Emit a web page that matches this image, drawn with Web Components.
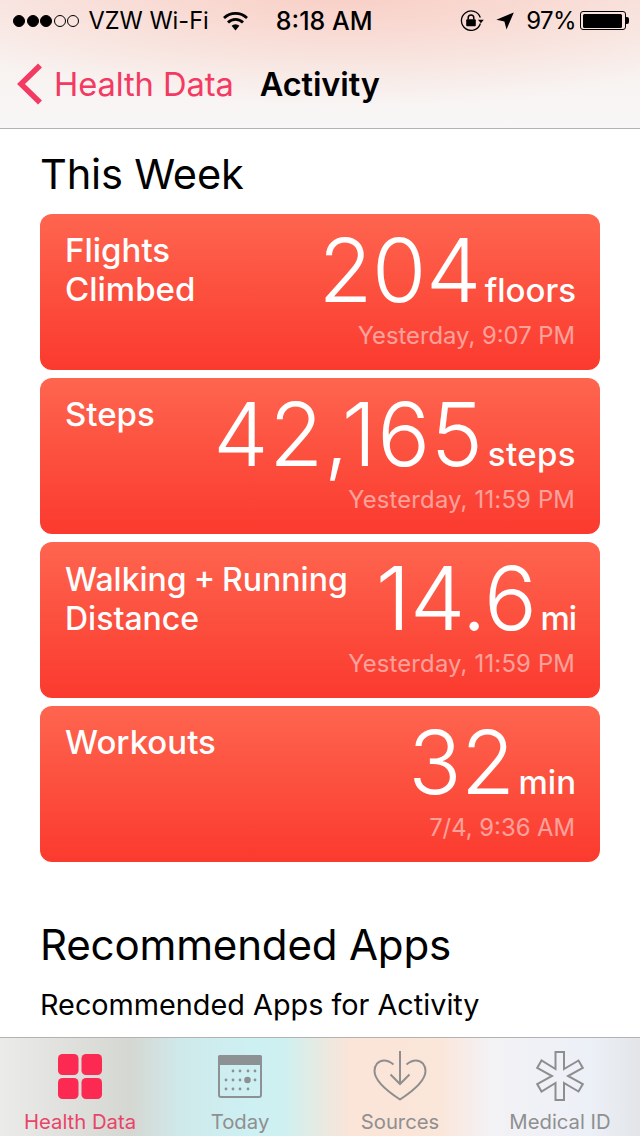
<!DOCTYPE html>
<html>
<head>
<meta charset="utf-8">
<title>Activity</title>
<style>
    html, body { margin: 0; height: 100%; }
    body {
        width: 640px;
        height: 1136px;
        overflow: hidden;
        background: #fff;
        font-family: Inter, "Liberation Sans", sans-serif;
        display: flex;
        flex-direction: column;
    }
</style>
</head>
<body>
<app-header></app-header>
<main-list>
    <section-title>This Week</section-title>
    <data-card label="Flights<br>Climbed" value="204" unit="floors" time="Yesterday, 9:07 PM"></data-card>
    <data-card style="--value-spacing: .7px; --unit-spacing: .4px; --time-spacing: .2px" label="Steps" value="42,165" unit="steps" time="Yesterday, 11:59 PM"></data-card>
    <data-card style="--label-size: 32px; --label-word: -1.5px; --label-top: 2px; --unit-spacing: -1px; --time-spacing: .2px" label="Walking + Running<br>Distance" value="14.6" unit="mi" time="Yesterday, 11:59 PM"></data-card>
    <data-card label="Workouts" value="32" unit="min" time="7/4, 9:36 AM"></data-card>
    <section-title class="apps">Recommended Apps</section-title>
    <sub-title>Recommended Apps for Activity</sub-title>
</main-list>
<tab-bar></tab-bar>

<script>
class AppHeader extends HTMLElement {
    constructor() {
        super();
        this.attachShadow({mode: 'open'}).innerHTML = `
            <style>
                :host {
                    display: block;
                    height: 128px;
                    flex: none;
                    border-bottom: 1px solid #b4b2b2;
                    background:
                        radial-gradient(ellipse 470px 115px at 350px -10px, rgba(248,205,195,.95), rgba(248,205,195,0)),
                        linear-gradient(180deg, #f9ecE9 0, #f8f3f1 70px, #f8f6f6 128px);
                    color: #000;
                }
                .status {
                    height: 41px;
                    display: flex;
                    align-items: center;
                    font-size: 24px;
                    padding: 0 11px 0 13px;
                    white-space: nowrap;
                }
                .dots { display: flex; gap: 1.6px; margin-right: 9px; }
                .dots i { width: 12px; height: 12px; border-radius: 50%; border: 1.2px solid #000; box-sizing: border-box; }
                .dots i.on { background: #000; }
                .carrier { margin-right: 14px; font-size: 23.600px; }
                .time { font-weight: 500; margin-left: 28px; font-size: 25px; }
                .right { margin-left: auto; display: flex; align-items: center; }
                .lock { margin-right: 12px; }
                .arrow { margin-right: 12px; }
                .percent { letter-spacing: -.6px; }
                .battery { margin-left: 4px; display: flex; align-items: center; }
                .battery b { display: block; width: 46px; height: 19px; border: 1px solid #000; border-radius: 3px; padding: 1.5px; box-sizing: border-box; }
                .battery b::before { content: ""; display: block; width: 96%; height: 100%; background: #000; border-radius: 1.5px; }
                .battery u { display: block; width: 3px; height: 7px; background: #000; border-radius: 0 2px 2px 0; }
                .nav {
                    height: 86px;
                    padding: 0 0 1px 17px;
                    display: flex;
                    align-items: center;
                    white-space: nowrap;
                }
                .back { color: #f33a62; font-size: 32.700px; margin-left: 11px; letter-spacing: -.1px; }
                .title { font-size: 32.500px; font-weight: 600; margin-left: 26px; letter-spacing: -.1px; }
                .nav svg { display: block; }
            </style>
            <div class="status">
                <span class="dots"><i class="on"></i><i class="on"></i><i class="on"></i><i></i><i></i></span>
                <span class="carrier">VZW Wi-Fi</span>
                <svg width="25" height="20" viewBox="0 0 25 20" fill="none" stroke="#000" stroke-width="2.800"><path d="M1 7a16.500 16.500 0 0 1 23 0"/><path d="M5 11.500a10.600 10.600 0 0 1 15 0"/><path d="M8.600 14.800a5.500 5.500 0 0 1 7.800 0L12.500 19.400z" fill="#000" stroke="none"/></svg>
                <span class="time">8:18 AM</span>
                <span class="right">
                    <svg class="lock" width="24" height="21" viewBox="0 0 24 21"><path d="M20.300 7.500A9.700 9.700 0 1 0 20.400 13.500" fill="none" stroke="#000" stroke-width="1.300"/><path d="M18 9.800h5.800l-2.900 3.400z" fill="#000"/><rect x="6.200" y="9.200" width="9.600" height="7" rx="1" fill="#000"/><path d="M8.200 9.400V7.800a2.800 2.800 0 0 1 5.600 0v1.600" fill="none" stroke="#000" stroke-width="1.500"/></svg>
                    <svg class="arrow" width="18" height="18" viewBox="0 0 18 18"><path d="M17.800.4 10.500 17.600 8.400 9.600.4 7.800z" fill="#000"/></svg>
                    <span class="percent">97%</span>
                    <span class="battery"><b></b><u></u></span>
                </span>
            </div>
            <div class="nav">
                <svg width="26" height="42" viewBox="0 0 26 42"><path d="M23 2.500 4 21l19 18.500" fill="none" stroke="#f33a62" stroke-width="5.500"/></svg>
                <span class="back">Health Data</span>
                <span class="title">Activity</span>
            </div>
        `;
    }
}

class MainList extends HTMLElement {
    constructor() {
        super();
        this.attachShadow({mode: 'open'}).innerHTML = `
            <style>
                :host {
                    display: flex;
                    flex-direction: column;
                    flex: 1;
                    min-height: 0;
                    overflow: hidden;
                    padding: 17px 40px 0;
                    gap: 8px;
                }
            </style>
            <slot></slot>
        `;
    }
}

class SectionTitle extends HTMLElement {
    constructor() {
        super();
        this.attachShadow({mode: 'open'}).innerHTML = `
            <style>
                :host {
                    display: block;
                    font-size: 41.600px;
                    line-height: 57px;
                    margin-bottom: 3px;
                    color: #000;
                    letter-spacing: -.2px;
                }
                :host(.apps) { margin-top: 46px; margin-bottom: 2px; font-size: 42.100px; }
            </style>
            <slot></slot>
        `;
    }
}

class SubTitle extends HTMLElement {
    constructor() {
        super();
        this.attachShadow({mode: 'open'}).innerHTML = `
            <style>
                :host {
                    display: block;
                    font-size: 28.800px;
                    line-height: 40px;
                    color: #000;
                    margin-top: 2px;
                }
            </style>
            <slot></slot>
        `;
    }
}

class DataCard extends HTMLElement {
    constructor() {
        super();
        const get = (n) => this.getAttribute(n);
        this.attachShadow({mode: 'open'}).innerHTML = `
            <style>
                :host {
                    display: block;
                    height: 156px;
                    flex: none;
                    box-sizing: border-box;
                    border-radius: 12px;
                    color: #fff;
                    background: linear-gradient(180deg, #fe654f 0%, #fb3a2e 100%);
                    padding: 17px 24px 0 25px;
                }
                .top { display: flex; justify-content: space-between; align-items: flex-start; height: 90px; }
                .label { font-size: var(--label-size, 33px); margin-top: var(--label-top, 0); font-weight: 500; line-height: 38.500px; word-spacing: var(--label-word, 0); white-space: nowrap; }
                .reading { display: flex; align-items: baseline; white-space: nowrap; margin-top: -13px; }
                .value { font-size: 88px; font-weight: 300; line-height: 104px; letter-spacing: var(--value-spacing, -.5px); }
                .unit { font-size: 33px; font-weight: 500; margin-left: 4px; letter-spacing: var(--unit-spacing, 0); }
                .time { text-align: right; font-size: 23.800px; line-height: 30px; opacity: .5; margin-right: 1px; letter-spacing: var(--time-spacing, 0); }
            </style>
            <div class="top">
                <div class="label">${get('label')}</div>
                <div class="reading"><span class="value">${get('value')}</span><span class="unit">${get('unit')}</span></div>
            </div>
            <div class="time">${get('time')}</div>
        `;
    }
}

class TabItem extends HTMLElement {
    constructor() {
        super();
        this.attachShadow({mode: 'open'}).innerHTML = `
            <style>
                :host {
                    display: flex;
                    flex-direction: column;
                    align-items: center;
                    flex: 1;
                    color: #8f8f8f;
                    font-size: 20.300px;
                }
                :host([active]) { color: #e8446a; }
                .icon { height: 52px; margin-top: 12px; display: flex; align-items: center; justify-content: center; }
                .text { line-height: 24px; margin-top: 8px; white-space: nowrap; }
                ::slotted(svg) { display: block; }
            </style>
            <div class="icon"><slot></slot></div>
            <div class="text">${this.getAttribute('text')}</div>
        `;
    }
}

class TabBar extends HTMLElement {
    constructor() {
        super();
        this.attachShadow({mode: 'open'}).innerHTML = `
            <style>
                :host {
                    display: flex;
                    flex: none;
                    height: 98px;
                    border-top: 1px solid #b4b2b0;
                    background: linear-gradient(90deg, #ebebe9 0, #d5d7d2 130px, #cfe9ea 180px, #cdf0f3 250px, #cff0f0 285px, #ebe9e0 325px, #fbe4d8 350px, #fbe6da 440px, #f3f2f5 490px, #ecf0f7 590px, #e3e5e8 640px);
                }
            </style>
            <tab-item active text="Health Data">
                <svg width="44" height="45" viewBox="0 0 44 45" fill="#fc2a52"><rect width="20.500" height="21" rx="4.500"/><rect x="23.500" width="20.500" height="21" rx="4.500"/><rect y="24" width="20.500" height="21" rx="4.500"/><rect x="23.500" y="24" width="20.500" height="21" rx="4.500"/></svg>
            </tab-item>
            <tab-item text="Today">
                <svg width="44" height="43" viewBox="0 0 44 43"><rect x="1" y="1" width="42" height="41" rx="2" fill="none" stroke="#8e9194" stroke-width="2"/><path d="M2 0h40a2 2 0 0 1 2 2v8H0V2a2 2 0 0 1 2-2z" fill="#8e9194"/><g fill="#8e9194"><circle cx="15" cy="16" r="1.400"/><circle cx="22" cy="16" r="1.400"/><circle cx="30" cy="16" r="1.400"/><circle cx="37" cy="16" r="1.400"/><circle cx="8" cy="25" r="1.400"/><circle cx="15" cy="25" r="1.400"/><circle cx="22" cy="25" r="1.400"/><circle cx="29.500" cy="25" r="3.300"/><circle cx="37" cy="25" r="1.400"/><circle cx="8" cy="34" r="1.400"/><circle cx="15" cy="34" r="1.400"/><circle cx="22" cy="34" r="1.400"/><circle cx="30" cy="34" r="1.400"/></g></svg>
            </tab-item>
            <tab-item text="Sources">
                <svg width="54" height="50" viewBox="0 0 54 50" fill="none" stroke="#8e8e8e" stroke-width="2"><path d="M20.500 13.500C17 10.500 14 9.500 11 9.500 5 9.500 1.500 14.500 1.500 20c0 10 14 21 25.500 28.500C38.500 41 52.500 30 52.500 20c0-5.500-3.500-10.500-9.500-10.500-3 0-6 1-9.500 4"/><path d="M27 0v33M17.500 23.500 27 33l9.500-9.500"/></svg>
            </tab-item>
            <tab-item text="Medical ID">
                <svg width="50" height="50" viewBox="0 0 50 50" fill="none" stroke="#8e8e8e" stroke-width="2"><path d="M20.500 1h8.500v17l14.500-8.500 4.300 7.400L33 25l14.800 8.100-4.300 7.400L29 32v17h-8.500V32L6.500 40.500l-4.300-7.400L17 25 2.200 16.900l4.300-7.400L20.500 18z"/></svg>
            </tab-item>
        `;
    }
}

window.customElements.define('app-header', AppHeader);
window.customElements.define('main-list', MainList);
window.customElements.define('section-title', SectionTitle);
window.customElements.define('sub-title', SubTitle);
window.customElements.define('data-card', DataCard);
window.customElements.define('tab-item', TabItem);
window.customElements.define('tab-bar', TabBar);
</script>
</body>
</html>
